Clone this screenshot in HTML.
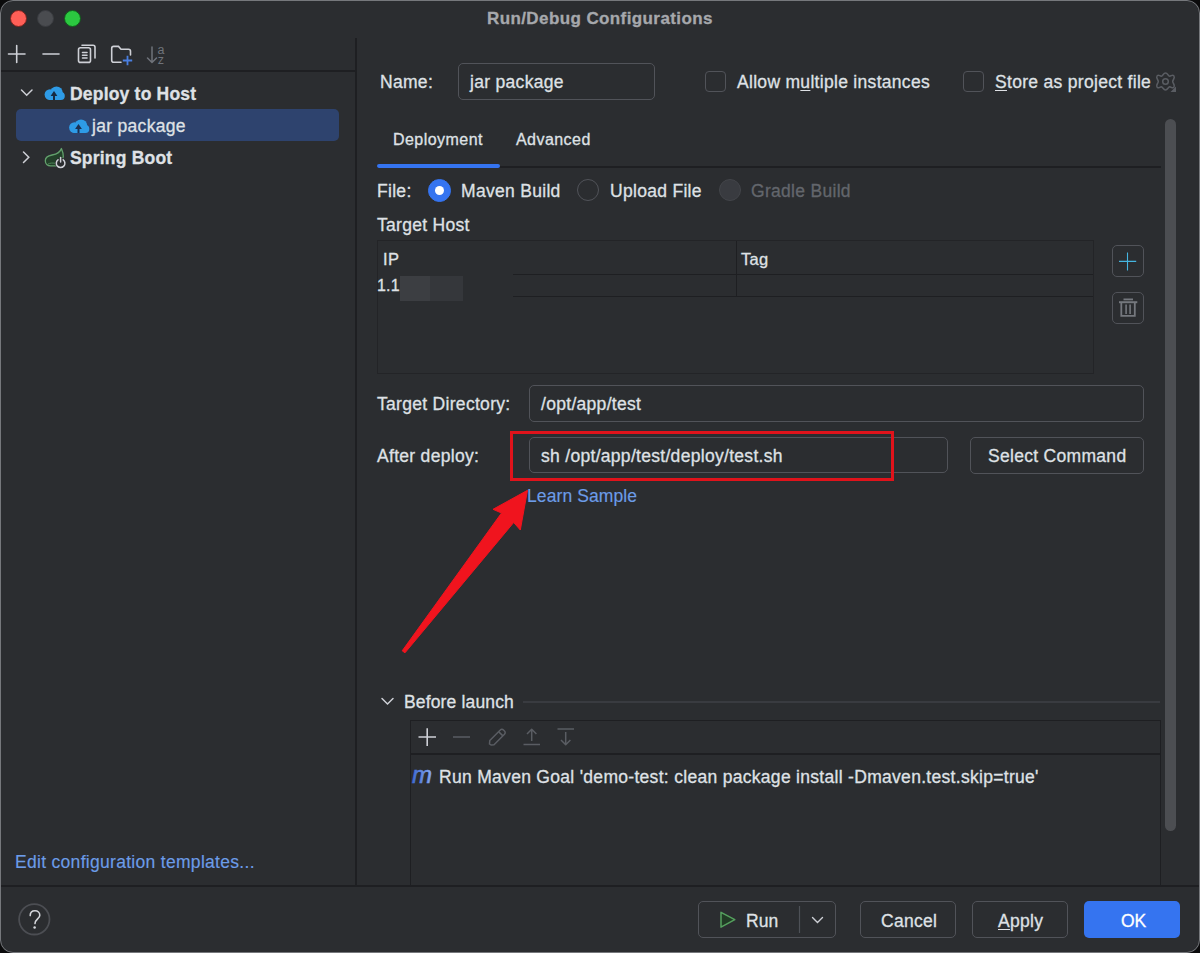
<!DOCTYPE html>
<html><head><meta charset="utf-8">
<style>
*{box-sizing:border-box;margin:0;padding:0}
html,body{width:1200px;height:953px;overflow:hidden;background:#0b0b0c}
body{font-family:"Liberation Sans",sans-serif;color:#DFE1E5;font-size:17.5px;letter-spacing:0.3px}
#win{position:absolute;left:0;top:0;width:1200px;height:953px;background:#2B2D30;border-radius:13px;overflow:hidden}
#wb{position:absolute;left:0;top:0;width:1200px;height:953px;border-radius:13px;border:1px solid #76787c;pointer-events:none}
.a{position:absolute;white-space:pre;line-height:1;-webkit-text-stroke:0.3px currentColor}
.sep{position:absolute;background:#1E1F22}
.tl{position:absolute;width:17px;height:17px;border-radius:50%}
.field{position:absolute;border:1.3px solid #515359;border-radius:5px}
.btn{position:absolute;border:1.3px solid #515359;border-radius:5px}
.cb{position:absolute;width:21px;height:21px;border:1.8px solid #515359;border-radius:4px}
.rad{position:absolute;width:22px;height:22px;border:1.8px solid #515359;border-radius:50%}
.link{color:#6C9CE8;-webkit-text-stroke:0.15px currentColor}
svg{position:absolute;overflow:visible}
u{text-decoration:underline;text-decoration-thickness:1.2px;text-underline-offset:1.5px}
</style></head><body>
<div id="win">
  <!-- traffic lights -->
  <div class="tl" style="left:9.8px;top:9.8px;background:#FF5F57;border:1px solid #7a2420"></div>
  <div class="tl" style="left:36.7px;top:9.8px;background:#4a4c50;border:1px solid #3a3c40"></div>
  <div class="tl" style="left:63.5px;top:9.8px;background:#2BC840;border:1px solid #125c1c"></div>
  <div class="a" style="left:487px;top:10px;font-weight:bold;color:#A6A8AC;font-size:17px;letter-spacing:0.4px">Run/Debug Configurations</div>

  <!-- left panel -->
  <div class="sep" style="left:355px;top:38px;width:2px;height:847px"></div>
  <div class="sep" style="left:0;top:70px;width:355px;height:2px"></div>

  <!-- left toolbar icons -->
  <svg style="left:0;top:0" width="1" height="1">
    <g fill="none" stroke="#CED0D6" stroke-width="1.6" stroke-linecap="round">
      <path d="M8.5 54H25M16.7 45.5V62.5"/>
      <path d="M43 54H59"/>
      <rect x="78.5" y="47.8" width="12" height="14.6" rx="2"/>
      <path d="M82 45.3H93a2 2 0 0 1 2 2V58"/>
      <path d="M82.5 52.5H87M82.5 55.2H87M82.5 58H87"/>
      <path d="M121 62.3H113.7a2 2 0 0 1-2-2V48.4a2 2 0 0 1 2-2H118.5l2.5 2.8H128.5a2 2 0 0 1 2 2V55"/>
    </g>
    <path d="M122.8 60.5H132.2M127.5 55.8V65.2" stroke="#4A7FE0" stroke-width="1.8" fill="none"/>
    <g fill="none" stroke="#6F737A" stroke-width="1.5" stroke-linecap="round">
      <path d="M152 47V62.5M147.5 58L152 62.5L156.5 58"/>
    </g>
    <text x="157.5" y="54.3" fill="#6F737A" font-size="12.5" font-family="Liberation Sans" letter-spacing="0">a</text>
    <text x="157.8" y="63.6" fill="#6F737A" font-size="12.5" font-family="Liberation Sans" letter-spacing="0">z</text>
  </svg>

  <!-- tree -->
  <div style="position:absolute;left:16px;top:109px;width:323px;height:32px;background:#2E436E;border-radius:5px"></div>
  <svg style="left:0;top:0" width="1" height="1">
    <path d="M21.5 90L26.7 95.2L32 90" fill="none" stroke="#CED0D6" stroke-width="1.5" stroke-linecap="round"/>
    <path d="M23.5 152L28.8 157.2L23.5 162.5" fill="none" stroke="#CED0D6" stroke-width="1.5" stroke-linecap="round"/>
    <!-- cloud 1 -->
    <g transform="translate(44,86)">
      <g fill="#2E9BE6"><circle cx="6" cy="8.6" r="5.4"/><circle cx="12.5" cy="6.8" r="6.3"/><circle cx="16.8" cy="10" r="4"/><rect x="5" y="9" width="12" height="5"/></g>
      <path d="M10 14V8.5" stroke="#172A42" stroke-width="2"/><path d="M6.6 10L10 5L13.4 10Z" fill="#172A42"/>
    </g>
    <g transform="translate(68.5,119)">
      <g fill="#2E9BE6"><circle cx="6" cy="8.6" r="5.4"/><circle cx="12.5" cy="6.8" r="6.3"/><circle cx="16.8" cy="10" r="4"/><rect x="5" y="9" width="12" height="5"/></g>
      <path d="M10 14V8.5" stroke="#1B3052" stroke-width="2"/><path d="M6.6 10L10 5L13.4 10Z" fill="#1B3052"/>
    </g>
    <!-- spring boot -->
    <g transform="translate(38,143)">
      <path d="M23.4 5.5C22.3 9.5 19.5 11 14 12C9.5 12.8 7.3 15 7.3 17.8C7.3 20.8 9.5 22.8 12.5 22.8H18C20.5 21.5 25.3 17.5 25.3 13.5C25.3 10.5 24.5 8 23.4 5.5Z" fill="#23402A" stroke="#62A06C" stroke-width="1.3" stroke-linejoin="round"/>
      <path d="M10 21C12 20 14.5 19.8 17 20.3" fill="none" stroke="#4F8558" stroke-width="1"/>
      <circle cx="22.6" cy="20.2" r="5.6" fill="#2B2D30"/>
      <path d="M20 16.8A4.3 4.3 0 1 0 25.2 16.8" fill="none" stroke="#D0D2D8" stroke-width="1.5" stroke-linecap="round"/>
      <path d="M22.6 14.6V19" stroke="#D0D2D8" stroke-width="1.5" stroke-linecap="round"/>
    </g>
  </svg>
  <div class="a" style="left:70px;top:86px;font-weight:bold;font-size:17.5px;letter-spacing:0.2px">Deploy to Host</div>
  <div class="a" style="left:92px;top:118px">jar package</div>
  <div class="a" style="left:70px;top:150px;font-weight:bold;font-size:17.5px;letter-spacing:0.2px">Spring Boot</div>

  <div class="a link" style="left:15px;top:854px">Edit configuration templates...</div>

  <div class="sep" style="left:0;top:885px;width:1200px;height:2px"></div>

  <!-- right panel -->
  <div class="a" style="left:380px;top:74px">Name:</div>
  <div class="field" style="left:458px;top:63px;width:197px;height:37px"></div>
  <div class="a" style="left:470px;top:74px">jar package</div>

  <div class="cb" style="left:705px;top:71px"></div>
  <div class="a" style="left:737px;top:74px">Allow m<u>u</u>ltiple instances</div>
  <div class="cb" style="left:963px;top:71px"></div>
  <div class="a" style="left:995px;top:74px"><u>S</u>tore as project file</div>
  <svg style="left:0;top:0" width="1" height="1">
    <g transform="translate(1165.5,81.5)" fill="none" stroke="#5A5D63" stroke-width="1.5">
      <path d="M0,-8.5 C2.2,-8.5 2.5,-5.5 4.2,-5.2 C6,-5.6 7.6,-7.6 8.6,-5.2 C9.6,-3 7.2,-1.8 7.2,0 C7.2,1.8 9.6,3 8.6,5.2 C7.6,7.6 6,5.6 4.2,5.2 C2.5,5.5 2.2,8.5 0,8.5 C-2.2,8.5 -2.5,5.5 -4.2,5.2 C-6,5.6 -7.6,7.6 -8.6,5.2 C-9.6,3 -7.2,1.8 -7.2,0 C-7.2,-1.8 -9.6,-3 -8.6,-5.2 C-7.6,-7.6 -6,-5.6 -4.2,-5.2 C-2.5,-5.5 -2.2,-8.5 0,-8.5Z"/>
      <circle r="2.8"/>
    </g>
    <path d="M1176 86.5V92H1170.5Z" fill="#5A5D63"/>
  </svg>

  <div class="a" style="left:393px;top:132px;font-size:16px;letter-spacing:0.45px">Deployment</div>
  <div class="a" style="left:516px;top:132px;font-size:16px;letter-spacing:0.45px">Advanced</div>
  <div class="sep" style="left:377px;top:166px;width:784px;height:2px"></div>
  <div style="position:absolute;left:377px;top:164px;width:123px;height:4px;background:#3574F0;border-radius:2px"></div>

  <div style="position:absolute;left:1165px;top:119px;width:11px;height:712px;background:#4C4E52;border-radius:6px"></div>

  <div class="a" style="left:377px;top:183px">File:</div>
  <div class="rad" style="left:428px;top:179px;width:23px;height:23px;background:#3574F0;border-color:#3574F0"></div>
  <div style="position:absolute;left:435px;top:186px;width:9px;height:9px;border-radius:50%;background:#fff"></div>
  <div class="a" style="left:461px;top:183px">Maven Build</div>
  <div class="rad" style="left:577px;top:179px"></div>
  <div class="a" style="left:610px;top:183px">Upload File</div>
  <div class="rad" style="left:719px;top:179px;background:#393B40;border-color:#43454A"></div>
  <div class="a" style="left:751px;top:183px;color:#63666C">Gradle Build</div>

  <div class="a" style="left:377px;top:217px">Target Host</div>

  <!-- table -->
  <div style="position:absolute;left:377px;top:240px;width:717px;height:134px;border:1px solid #232427"></div>
  <div class="sep" style="left:513px;top:274px;width:580px;height:1px"></div>
  <div class="sep" style="left:736px;top:241px;width:1px;height:55px"></div>
  <div class="sep" style="left:513px;top:296px;width:580px;height:1px"></div>
  <div class="a" style="left:383px;top:251px;font-size:16.5px">IP</div>
  <div class="a" style="left:741px;top:251px;font-size:16.5px">Tag</div>
  <div class="a" style="left:377px;top:277.5px;font-size:16px;letter-spacing:0.2px">1.1</div>
  <div style="position:absolute;left:400px;top:276px;width:30px;height:25px;background:#3C3E42"></div>
  <div style="position:absolute;left:430px;top:276px;width:33px;height:25px;background:#35373B"></div>

  <div class="btn" style="left:1112px;top:245px;width:32px;height:32px"></div>
  <svg style="left:0;top:0" width="1" height="1">
    <path d="M1119 261.4H1136.2M1127.5 252.5V270.5" stroke="#45B5E0" stroke-width="1.1" fill="none"/>
  </svg>
  <div class="btn" style="left:1112px;top:292px;width:32px;height:32px"></div>
  <svg style="left:0;top:0" width="1" height="1">
    <g fill="none" stroke="#75787E" stroke-width="1.8">
      <path d="M1123.5 299.4H1133"/>
      <path d="M1119 302.2H1137.3" stroke-width="2"/>
      <path d="M1121.3 302.5V315.8H1134.8V302.5"/>
      <path d="M1126.1 304.5V314M1130.1 304.5V314" stroke-width="1.6"/>
    </g>
  </svg>

  <div class="a" style="left:377px;top:396px">Target Directory:</div>
  <div class="field" style="left:529px;top:385px;width:615px;height:37px"></div>
  <div class="a" style="left:541px;top:396px">/opt/app/test</div>

  <div class="a" style="left:377px;top:448px">After deploy:</div>
  <div class="field" style="left:529px;top:437px;width:419px;height:36px"></div>
  <div class="a" style="left:541px;top:448px">sh /opt/app/test/deploy/test.sh</div>
  <div class="btn" style="left:970px;top:437px;width:174px;height:37px"></div>
  <div class="a" style="left:988px;top:448px">Select Command</div>

  <div class="a link" style="left:527px;top:488px;letter-spacing:0.1px">Learn Sample</div>

  <!-- annotation -->
  <div style="position:absolute;left:510px;top:431px;width:384px;height:50px;border:3.6px solid #E0131B"></div>
  <svg style="left:0;top:0" width="1" height="1">
    <path d="M402.2 650.8L501.5 513L493 509.3L527.5 490.3L520.3 530L513.7 522.5L405 652.8Z" fill="#F0141E" stroke="#F0141E" stroke-width="1" stroke-linejoin="round"/>
  </svg>

  <!-- before launch -->
  <svg style="left:0;top:0" width="1" height="1">
    <path d="M382 698.5L387.5 704L393 698.5" fill="none" stroke="#CED0D6" stroke-width="1.5" stroke-linecap="round"/>
  </svg>
  <div class="a" style="left:404px;top:694px;letter-spacing:0.15px">Before launch</div>
  <div style="position:absolute;left:523px;top:701px;width:637px;height:1.5px;background:#393B40"></div>
  <div style="position:absolute;left:410px;top:720px;width:751px;height:167px;border:1px solid #1E1F22"></div>
  <div class="sep" style="left:411px;top:752.5px;width:749px;height:2px"></div>
  <svg style="left:0;top:0" width="1" height="1">
    <path d="M418.5 737H436M427.2 728.3V746" stroke="#CED0D6" stroke-width="1.6" fill="none"/>
    <path d="M453 737H470" stroke="#5A5D63" stroke-width="1.5" fill="none"/>
    <g fill="none" stroke="#5A5D63" stroke-width="1.5" stroke-linejoin="round">
      <path d="M491 745L489.5 744L489.8 740.5L500.3 730A2.2 2.2 0 0 1 503.5 730L504.5 731A2.2 2.2 0 0 1 504.5 734.2L494 744.7Z"/>
      <path d="M498.6 731.6L502.9 735.9"/>
      <path d="M523.5 744.5H540M531.7 741V729.5M527 734L531.7 729.3L536.4 734"/>
      <path d="M557.5 729H574M565.7 732V744.5M561 740L565.7 744.7L570.4 740"/>
    </g>
    <defs><linearGradient id="mg" x1="0" y1="0" x2="1" y2="0"><stop offset="0" stop-color="#3E6AD2"/><stop offset="1" stop-color="#86A9F2"/></linearGradient></defs>
    <text x="412" y="783" fill="url(#mg)" stroke="url(#mg)" stroke-width="0.6" font-size="24" font-style="italic" font-family="Liberation Sans" letter-spacing="0">m</text>
  </svg>
  <div class="a" style="left:439px;top:769px">Run Maven Goal 'demo-test: clean package install -Dmaven.test.skip=true'</div>

  <!-- bottom -->
  <svg style="left:0;top:0" width="1" height="1">
    <circle cx="34.3" cy="919.3" r="15.2" fill="none" stroke="#4C4E53" stroke-width="1.8"/>
    <path d="M30.2 915.6C30.2 912.5 32.3 910.8 35 910.8C37.7 910.8 39.8 912.6 39.8 915.2C39.8 918.6 35 919.4 35 923.6" fill="none" stroke="#D5D7DC" stroke-width="1.6" stroke-linecap="round"/>
    <circle cx="34.6" cy="927.6" r="1.25" fill="#D5D7DC"/>
  </svg>

  <div class="btn" style="left:698px;top:901px;width:138px;height:37px"></div>
  <svg style="left:0;top:0" width="1" height="1">
    <path d="M721 912.3L734.8 919.7L721 927.2Z" fill="#213A25" stroke="#55A05E" stroke-width="1.5" stroke-linejoin="round"/>
    <path d="M799.5 906V933" stroke="#4E5157" stroke-width="1.2"/>
    <path d="M812.5 917.5L817.5 922.5L822.5 917.5" fill="none" stroke="#CED0D6" stroke-width="1.4" stroke-linecap="round"/>
  </svg>
  <div class="a" style="left:746px;top:913px;letter-spacing:0.1px">Run</div>
  <div class="btn" style="left:860px;top:901px;width:96px;height:37px"></div>
  <div class="a" style="left:881px;top:913px">Cancel</div>
  <div class="btn" style="left:972px;top:901px;width:96px;height:37px"></div>
  <div class="a" style="left:998px;top:913px"><u>A</u>pply</div>
  <div style="position:absolute;left:1084px;top:901px;width:96px;height:37px;background:#3574F0;border-radius:5px"></div>
  <div class="a" style="left:1121px;top:913px;color:#fff;letter-spacing:0px">OK</div>
<div id="wb"></div>
</div>
</body></html>
